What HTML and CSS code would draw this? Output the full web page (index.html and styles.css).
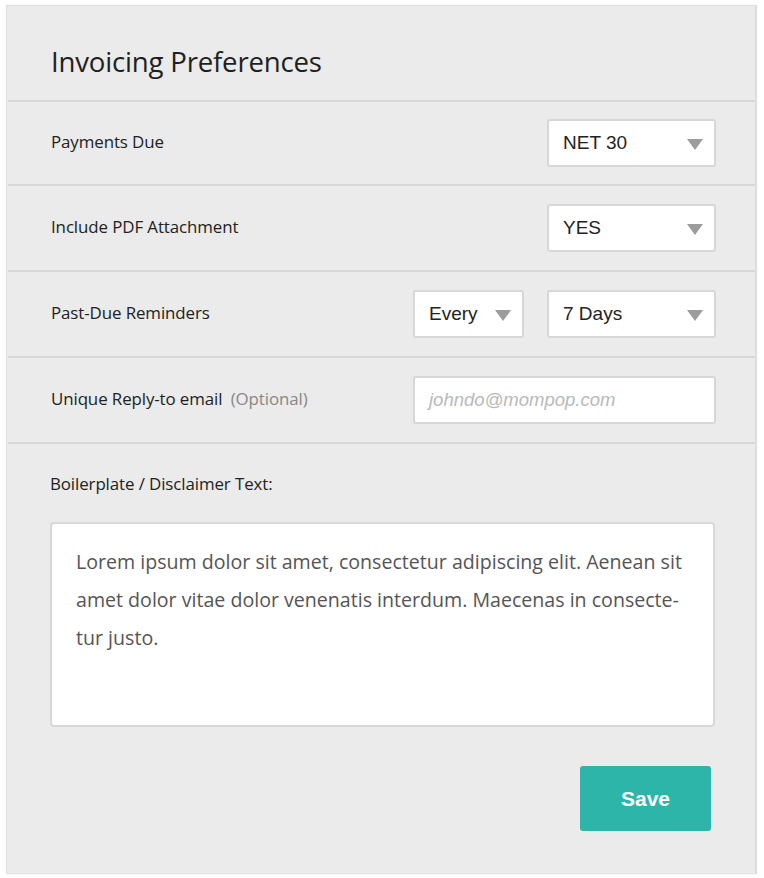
FILE: index.html
```html
<!DOCTYPE html>
<html>
<head>
<meta charset="utf-8">
<link rel="stylesheet" href="styles.css">
</head>
<body>
<div class="panel">
  <h1 class="title">Invoicing Preferences</h1>
  <div class="row first">
    <div class="label">Payments Due</div>
    <div class="controls">
      <div class="select wide"><span>NET 30</span><i class="caret"></i></div>
    </div>
  </div>
  <div class="row">
    <div class="label">Include PDF Attachment</div>
    <div class="controls">
      <div class="select wide"><span>YES</span><i class="caret"></i></div>
    </div>
  </div>
  <div class="row">
    <div class="label">Past-Due Reminders</div>
    <div class="controls">
      <div class="select narrow"><span>Every</span><i class="caret"></i></div>
      <div class="select wide"><span>7 Days</span><i class="caret"></i></div>
    </div>
  </div>
  <div class="row">
    <div class="label">Unique Reply-to email <span class="opt">(Optional)</span></div>
    <div class="controls">
      <div class="input"><span>johndo@mompop.com</span></div>
    </div>
  </div>
  <div class="bottom">
    <div class="label">Boilerplate / Disclaimer Text:</div>
    <div class="textarea">Lorem ipsum dolor sit amet, consectetur adipiscing elit. Aenean sit amet dolor vitae dolor venenatis interdum. Maecenas in consecte-tur justo.</div>
    <div class="actions"><button class="save">Save</button></div>
  </div>
</div>
</body>
</html>
```
FILE: styles.css
```css
html, body { margin: 0; padding: 0; background: #ffffff; }
body { padding: 5px 6px 4px 6px; font-family: "Open Sans", "Liberation Sans", sans-serif; }
.panel {
  width: 751px;
  height: 869px;
  box-sizing: border-box;
  background: #eaebea;
  border: 1px solid #e0e1e0;
  border-right: 2px solid #dcdddc;
  box-shadow: 0 0 2px rgba(0,0,0,0.06);
  display: flex;
  flex-direction: column;
}
.title {
  margin: 0;
  height: 96px;
  box-sizing: border-box;
  padding: 38px 0 0 43px;
  font-weight: 400;
  font-size: 27.6px;
  line-height: 34px;
  color: #1f1f1f;
  letter-spacing: -0.2px;
  border-bottom: 2px solid #d6d7d6;
  margin-left: 1px;
}
.row {
  display: flex;
  align-items: center;
  justify-content: space-between;
  height: 84px;
  padding: 0 39px 0 43px;
  border-bottom: 2px solid #d6d7d6;
  margin-left: 1px;
}
.row.first { height: 82px; }
.label {
  font-size: 16.9px;
  color: #222;
  letter-spacing: -0.1px;
}
.row .label { margin-top: -3px; }
.opt { color: #888; margin-left: 4px; }
.controls { display: flex; gap: 23px; }
.select, .input {
  height: 48px;
  box-sizing: border-box;
  background: #fff;
  border: 2px solid #d6d7d6;
  border-radius: 3px;
  display: flex;
  align-items: center;
  justify-content: space-between;
  font-family: "Liberation Sans", Arial, sans-serif;
  font-size: 19px;
  color: #222;
  padding: 0 11px 0 14px;
}
.select.wide { width: 169px; }
.select.narrow { width: 111px; }
.input { width: 303px; }
.input span { font-style: italic; color: #b9b9b9; font-size: 18.5px; }
.caret {
  width: 0; height: 0;
  border-left: 8px solid transparent;
  border-right: 8px solid transparent;
  border-top: 11px solid #9c9c9c;
  margin-top: 2px;
}
.bottom {
  padding: 28px 40px 0 43px;
  flex: 1;
  display: flex;
  flex-direction: column;
}
.textarea {
  margin-top: 27px;
  height: 205px;
  box-sizing: border-box;
  background: #fff;
  border: 2px solid #d6d7d6;
  border-radius: 4px;
  padding: 19px 24px 0 24px;
  font-size: 19.6px;
  line-height: 38px;
  color: #555;
}
.actions { display: flex; justify-content: flex-end; margin-top: 39px; padding-right: 4px; }
.save {
  width: 131px;
  height: 65px;
  border: none;
  border-radius: 3px;
  background: #2db5a9;
  color: #fff;
  font-family: "Liberation Sans", Arial, sans-serif;
  font-weight: 700;
  font-size: 21px;
}
```
